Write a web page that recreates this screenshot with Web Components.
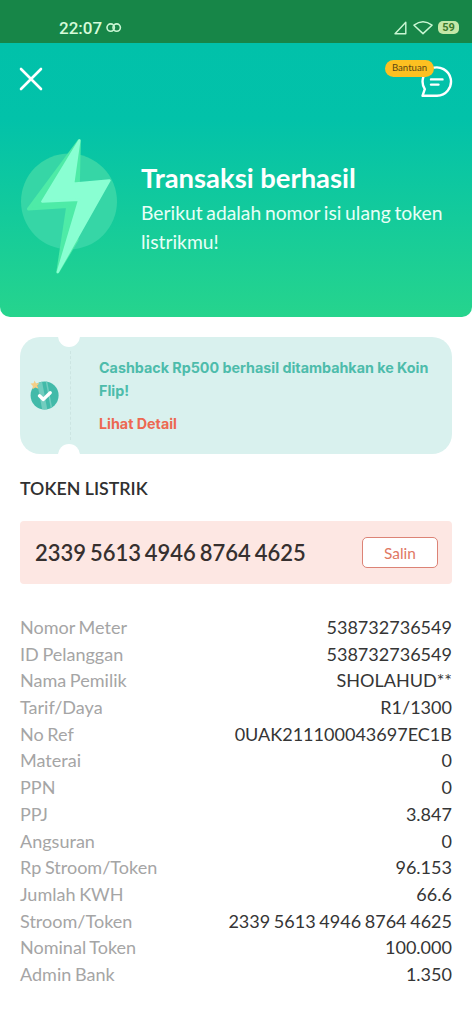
<!DOCTYPE html>
<html lang="id">
<head>
<meta charset="utf-8">
<title>Transaksi berhasil</title>
<style>
html,body{margin:0;background:#fff}
body{width:472px;height:1024px;overflow:hidden;font-family:Lato,"Liberation Sans",sans-serif;color:#333}
</style>
</head>
<body>
<receipt-page></receipt-page>
<script>
const define = (name, html) => customElements.define(name, class extends HTMLElement {
  constructor() {
    super();
    this.attachShadow({mode: 'open'}).innerHTML = html;
  }
});

define('status-bar', `
<style>
:host{display:flex;height:43px;box-sizing:border-box;background:#178648;color:#d5fbd9;padding:12px 13px 0 59px;align-items:center;font:500 17px Roboto,sans-serif}
svg{display:block}
.link{margin-left:4px}
.right{margin-left:auto;display:flex;align-items:center;gap:6px}
.bat{width:21px;height:13px;border-radius:5px;background:#c4e8a8;color:#3b7a2c;font:700 11px/13px Roboto,sans-serif;text-align:center;margin-left:-1px}
</style>
<span>22:07</span>
<svg class="link" width="16" height="10" viewBox="0 0 16 10" fill="none" stroke="#c9f6d3" stroke-width="1.6"><circle cx="4.7" cy="4.6" r="3.7"/><circle cx="10.7" cy="4.6" r="3.7"/></svg>
<div class="right">
<svg width="14" height="14" viewBox="0 0 14 14" fill="none" stroke="#c9f6d3" stroke-width="1.4" stroke-linejoin="round"><path d="M12.8 1.2V12.8H2Z"/></svg>
<svg width="20" height="14" viewBox="0 0 20 14" fill="none" stroke="#c9f6d3" stroke-width="1.5" stroke-linejoin="round"><path d="M1 4.2Q10-2.6 19 4.2L10 12.6Z"/></svg>
<div class="bat">59</div>
</div>`);

define('help-button', `
<style>
:host{display:block;position:relative;width:69px;height:40px}
svg{position:absolute;left:37px;top:6px}
span{position:absolute;left:2px;top:1px;width:49px;height:17px;border-radius:9px;background:#fdc021;color:#5b4713;font-size:9.6px;line-height:16px;text-align:center}
</style>
<svg width="34" height="34" viewBox="0 0 34 34" fill="none" stroke="#fff" stroke-width="2.4" stroke-linecap="round" stroke-linejoin="round"><path d="M2.5 30.8L4.8 24.2A14.2 14.2 0 1 1 17 30.8Z"/><path d="M11 14.4H22.5M11 19.6H18.5"/></svg>
<span>Bantuan</span>`);

define('success-header', `
<style>
:host{display:block;height:274px;box-sizing:border-box;background:linear-gradient(#01c1aa 0,#02c2a9 28%,#26d48d 100%);border-radius:0 0 10px 10px;color:#fff;padding:16px 20px 0 19px}
.top{display:flex;justify-content:space-between}
.x{display:block;margin-top:8px}
.body{display:flex;margin-top:36px}
.bolt{display:block;flex:none;width:100px;height:140px}
.text{margin:27px 0 0 22px}
h1{margin:0;font-size:27.4px;line-height:32px;font-weight:700;white-space:nowrap}
p{margin:4px 0 0;font-size:19.3px;line-height:29px;word-spacing:-1.2px;white-space:nowrap;color:#e8fff7}
</style>
<div class="top">
<svg class="x" width="24" height="24" viewBox="0 0 24 24" stroke="#fff" stroke-width="2.6" stroke-linecap="round"><path d="M2 2L22 22M22 2L2 22"/></svg>
<help-button></help-button>
</div>
<div class="body">
<svg class="bolt" viewBox="0 0 100 140"><circle cx="50" cy="66.5" r="48" fill="#36d6a6"/><g stroke-linejoin="round" stroke-width="3"><path d="M60.3 5.5L9.5 74L48.7 71.5L38.8 137L58 105L60.3 9Z" fill="#4eeba7" stroke="#4eeba7"/><path d="M60.3 5.5L23.3 66.5L60.3 64.7L38.8 137L90.5 45.5L54.2 48.7Z" fill="#89ffd2" stroke="#89ffd2" stroke-width="2.4"/></g></svg>
<div class="text"><h1>Transaksi berhasil</h1><p>Berikut adalah nomor isi ulang token<br>listrikmu!</p></div>
</div>`);

define('cashback-ticket', `
<style>
:host{display:flex;position:relative;height:117px;margin:20px 20px 0;border-radius:20px;background:#d9f1ee;overflow:hidden;font-family:Inter,sans-serif;font-weight:700;font-size:14.3px;line-height:23px}
.stub{width:50px;flex:none;display:flex;align-items:center}
.stub svg{margin:-3px 0 0 9px}
.cut{position:absolute;left:38px;width:22px;height:22px;border-radius:50%;background:#fff}
.t{top:-12px}.b{bottom:-12px}
.dash{margin:14px 0;border-left:1px dashed #cce5e2}
.text{margin:18.5px 0 0 28px;color:#4dbcab;white-space:nowrap}
.link{display:block;margin-top:10px;color:#ed6851}
</style>
<div class="stub"><svg width="32" height="32" viewBox="0 0 32 32"><defs><clipPath id="c"><circle cx="15.6" cy="17.5" r="14"/></clipPath></defs><circle cx="15.6" cy="17.5" r="14" fill="#42baa9"/><g clip-path="url(#c)" stroke="#72cdbf"><path d="M10 1L16 33" stroke-width="5"/><path d="M17 1L23 33" stroke-width="1.5"/></g><path d="M10.5 17.8L14.4 21.4L21.2 14.8" fill="none" stroke="#fff" stroke-width="3.4" stroke-linecap="round" stroke-linejoin="round"/><path d="M5.5 2.5L7 5.3L10.3 5.2L8.3 7.6L9.4 10.8L6.3 9.5L3.5 11.3L3.8 8L1.5 5.6L4.6 5.2Z" fill="#f5ce85"/></svg></div>
<i class="cut t"></i><i class="cut b"></i><div class="dash"></div>
<div class="text"><span class="m">Cashback Rp500 berhasil ditambahkan ke Koin<br>Flip!</span><span class="link">Lihat Detail</span></div>`);

define('token-box', `
<style>
:host{display:block;margin:22px 20px 0}
h2{margin:0;font-size:17.8px;line-height:24px;font-weight:600;color:#303030}
.box{display:flex;align-items:center;justify-content:space-between;height:63px;box-sizing:border-box;margin-top:21px;padding:0 14px 0 15px;background:#fde7e3;border-radius:4px}
.n{font-size:22px;font-weight:600;word-spacing:-1.6px;color:#36302f;white-space:nowrap}
button{width:76px;height:31px;padding:0;border:1.5px solid #dc8376;border-radius:5px;background:#fff;color:#df7864;font:15.4px Lato,sans-serif}
</style>
<h2>TOKEN LISTRIK</h2>
<div class="box"><span class="n"><slot></slot></span><button>Salin</button></div>`);

define('detail-row', `
<style>
:host{display:flex;justify-content:space-between;height:26.7px;line-height:26.7px;font-size:18.05px;word-spacing:-1px;color:#353535;white-space:nowrap}
.l{color:#a5a5a5}
</style><span class="l"><slot name="label"></slot></span><span class="v"><slot></slot></span>`);

const rows = [['Nomor Meter','538732736549'],['ID Pelanggan','538732736549'],['Nama Pemilik','SHOLAHUD**'],['Tarif/Daya','R1/1300'],['No Ref','0UAK211100043697EC1B'],['Materai','0'],['PPN','0'],['PPJ','3.847'],['Angsuran','0'],['Rp Stroom/Token','96.153'],['Jumlah KWH','66.6'],['Stroom/Token','2339 5613 4946 8764 4625'],['Nominal Token','100.000'],['Admin Bank','1.350']];

define('receipt-page', `
<style>
:host{display:block;width:472px;height:1024px;background:#fff}
section{margin:30px 20px 0}
</style>
<status-bar></status-bar>
<success-header></success-header>
<cashback-ticket></cashback-ticket>
<token-box>2339 5613 4946 8764 4625</token-box>
<section>${rows.map(([l, v]) => `<detail-row><span slot="label">${l}</span>${v}</detail-row>`).join('')}</section>`);
</script>
</body>
</html>
